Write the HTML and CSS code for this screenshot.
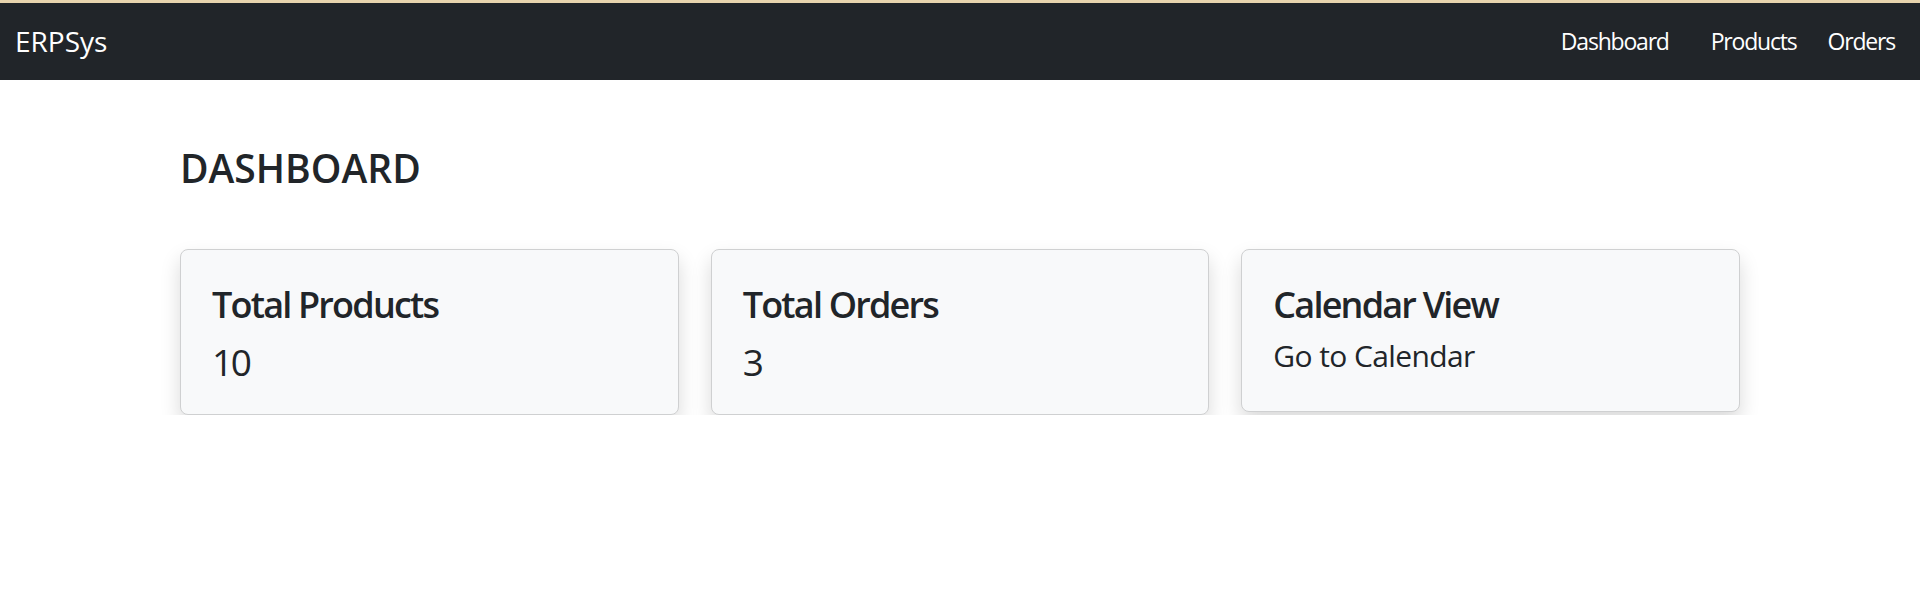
FILE: index.html
```html
<!DOCTYPE html>
<html lang="en">
<head>
<meta charset="utf-8">
<title>ERPSys</title>
<link rel="stylesheet" href="styles.css">
</head>
<body>
<div class="topline"></div>
<nav class="navbar">
  <a class="brand" href="#">ERPSys</a>
  <ul class="nav">
    <li><a class="nav-link nav-dashboard" href="#">Dashboard</a></li>
    <li><a class="nav-link nav-products" href="#">Products</a></li>
    <li><a class="nav-link nav-orders" href="#">Orders</a></li>
  </ul>
</nav>
<main class="container">
  <h2 class="page-title">DASHBOARD</h2>
  <div class="cards">
    <div class="card">
      <h5 class="card-title">Total Products</h5>
      <p class="card-value">10</p>
    </div>
    <div class="card">
      <h5 class="card-title">Total Orders</h5>
      <p class="card-value">3</p>
    </div>
    <div class="card">
      <h5 class="card-title">Calendar View</h5>
      <a class="card-link" href="#">Go to Calendar</a>
    </div>
  </div>
</main>
</body>
</html>
```

FILE: styles.css
```css
* {
  box-sizing: border-box;
}

body {
  margin: 0;
  font-family: "Open Sans", "Noto Sans", sans-serif;
  color: #212529;
  background: #ffffff;
}

.topline {
  height: 3px;
  background: #e8d4ae;
}

.navbar {
  height: 77px;
  background: #212529;
  display: flex;
  align-items: center;
  justify-content: space-between;
  padding: 0 25px 0 15px;
}

.brand {
  color: #ffffff;
  text-decoration: none;
  font-size: 28px;
  line-height: 1.2;
  letter-spacing: 0;
}

.nav {
  list-style: none;
  margin: 0;
  padding: 0;
  display: flex;
  align-items: center;
}

.nav-link {
  color: #ffffff;
  text-decoration: none;
  font-size: 23px;
  line-height: 1.2;
  letter-spacing: -1.2px;
}

.nav-products {
  margin-left: 42px;
  display: inline-block;
}

.nav-orders {
  margin-left: 31px;
  display: inline-block;
}

.container {
  width: 1560px;
  margin: 0 auto;
}

.page-title {
  margin: 64px 0 0;
  font-size: 39px;
  line-height: 47px;
  font-weight: 600;
  letter-spacing: 0;
}

.cards {
  margin-top: 58px;
  display: grid;
  grid-template-columns: repeat(3, 1fr);
  gap: 32px;
  align-items: start;
}

.card {
  background: #f8f9fa;
  border: 1px solid #cfd0d1;
  border-radius: 8px;
  box-shadow: 0 10px 20px rgba(0, 0, 0, 0.15);
  padding: 33px 31px 29px;
}

.card-title {
  margin: 0 0 12px;
  font-size: 36px;
  line-height: 43px;
  font-weight: 600;
  letter-spacing: -1.8px;
}

.card-value {
  margin: 0;
  font-size: 37px;
  line-height: 47px;
  letter-spacing: -2.5px;
}

.card-link {
  display: block;
  color: #212529;
  text-decoration: none;
  font-size: 30px;
  line-height: 35px;
  padding-bottom: 9px;
  letter-spacing: -0.6px;
}
```
